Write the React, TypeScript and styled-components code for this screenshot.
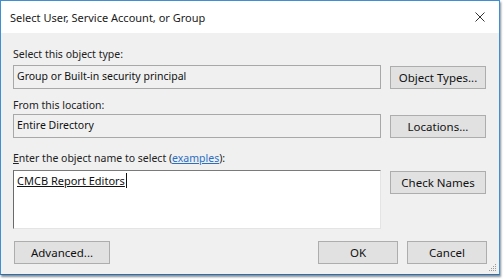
import styled, { createGlobalStyle } from 'styled-components';

const GlobalStyle = createGlobalStyle`
  body {
    margin: 0;
    background: #ffffff;
    font-family: 'Noto Sans', 'Liberation Sans', sans-serif;
  }
`;

const Screen = styled.div`
  width: 504px;
  height: 279px;
  overflow: hidden;
`;

const Window = styled.div`
  display: flex;
  flex-direction: column;
  box-sizing: border-box;
  width: 500px;
  height: 275px;
  border: 1px solid #3f8fd2;
  border-bottom-color: #2d6ea8;
  background: #f0f0f0;
  box-shadow: 1px 2px 2px rgba(30, 50, 70, 0.55);
`;

const TitleBar = styled.div`
  display: flex;
  align-items: center;
  justify-content: space-between;
  height: 32px;
  padding: 0 13px 0 9px;
  background: #ffffff;
`;

const Title = styled.span`
  font-size: 11px;
  color: #1a1a1a;
`;

const Body = styled.div`
  position: relative;
  flex: 1;
  display: flex;
  flex-direction: column;
  padding: 13px 12px 0 12px;
`;

const Label = styled.div<{ $top: number }>`
  margin-top: ${(p) => p.$top}px;
  height: 16px;
  line-height: 16px;
  font-size: 10.5px;
  color: #222;
`;

const FieldRow = styled.div<{ $top: number }>`
  display: grid;
  grid-template-columns: 368px 96px;
  column-gap: 9px;
  align-items: start;
  margin-top: ${(p) => p.$top}px;
`;

const ReadOnlyBox = styled.div`
  box-sizing: border-box;
  height: 24px;
  padding: 0 3px;
  border: 1px solid #a8a8a8;
  background: #f0f0f0;
  font-size: 10.5px;
  line-height: 20px;
  color: #111;
`;

const NameBox = styled.div`
  box-sizing: border-box;
  height: 59px;
  padding: 2px 3px;
  border: 1px solid #e4e4e4;
  border-top-color: #7a7a7a;
  border-left-color: #6a6a6a;
  background: #ffffff;
  font-size: 11px;
  line-height: 15px;
  color: #111;
`;

const Resolved = styled.span`
  text-decoration: underline;
  border-right: 1px solid #111;
  padding-right: 1px;
`;

const Button = styled.button<{ $w?: number }>`
  box-sizing: border-box;
  width: ${(p) => (p.$w ? `${p.$w}px` : '100%')};
  height: 23px;
  margin-top: 1px;
  padding: 0;
  border: 1px solid #adadad;
  background: #e1e1e1;
  font-family: inherit;
  font-size: 11.5px;
  color: #111;
`;

const Link = styled.a`
  color: #2a6fc4;
  text-decoration: underline;
`;

const AccessKey = styled.span`
  text-decoration: underline;
`;

const Footer = styled.div`
  display: flex;
  align-items: center;
  margin-top: 11px;
  padding-left: 1px;
`;

const Spacer = styled.div`
  flex: 1;
`;

const FooterRight = styled.div`
  display: flex;
  gap: 9px;
`;

const Grip = styled.svg`
  position: absolute;
  right: 2px;
  bottom: 2px;
`;

const CloseIcon = () => (
  <svg width="12" height="12" viewBox="0 0 12 12">
    <path d="M1.5 1.5 L10.5 10.5 M10.5 1.5 L1.5 10.5" stroke="#333" strokeWidth="1" />
  </svg>
);

export default function App() {
  return (
    <Screen>
      <GlobalStyle />
      <Window>
        <TitleBar>
          <Title>Select User, Service Account, or Group</Title>
          <CloseIcon />
        </TitleBar>
        <Body>
          <Label $top={0}>Select this object type:</Label>
          <FieldRow $top={3}>
            <ReadOnlyBox>Group or Built-in security principal</ReadOnlyBox>
            <Button>Object Types...</Button>
          </FieldRow>
          <Label $top={8}>From this location:</Label>
          <FieldRow $top={1}>
            <ReadOnlyBox>Entire Directory</ReadOnlyBox>
            <Button>Locations...</Button>
          </FieldRow>
          <Label $top={12}>
            <AccessKey>E</AccessKey>nter the object name to select (<Link>examples</Link>):
          </Label>
          <FieldRow $top={4}>
            <NameBox>
              <Resolved>CMCB Report Editors</Resolved>
            </NameBox>
            <Button>Check Names</Button>
          </FieldRow>
          <Footer>
            <Button $w={96}>Advanced...</Button>
            <Spacer />
            <FooterRight>
              <Button $w={80}>OK</Button>
              <Button $w={80}>Cancel</Button>
            </FooterRight>
          </Footer>
          <Grip width="10" height="10" viewBox="0 0 10 10">
            <g fill="#9a9a9a">
              <rect x="8" y="2" width="1" height="1" />
              <rect x="6" y="4" width="1" height="1" />
              <rect x="8" y="4" width="1" height="1" />
              <rect x="4" y="6" width="1" height="1" />
              <rect x="6" y="6" width="1" height="1" />
              <rect x="8" y="6" width="1" height="1" />
              <rect x="2" y="8" width="1" height="1" />
              <rect x="4" y="8" width="1" height="1" />
              <rect x="6" y="8" width="1" height="1" />
              <rect x="8" y="8" width="1" height="1" />
            </g>
          </Grip>
        </Body>
      </Window>
    </Screen>
  );
}
